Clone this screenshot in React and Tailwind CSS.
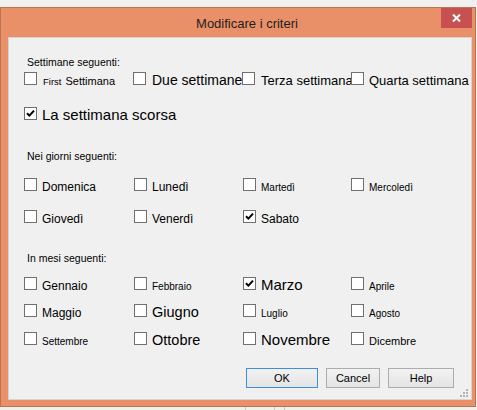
import React from "react";

const font = { fontFamily: '"Liberation Sans", Arial, sans-serif' };

/** Classic Win32 checkbox: 13px, gray edge, white fill */
const Box = ({ checked }) => (
  <span className="relative block w-[13px] h-[13px] shrink-0 border border-[#707070] bg-white">
    {checked && (
      <svg className="absolute left-0 top-0" width="11" height="11" viewBox="0 0 11 11">
        <path d="M2 5.2 L4.4 7.6 L9 2.6" fill="none" stroke="#000" strokeWidth="2" />
      </svg>
    )}
  </span>
);

const Check = ({ label, size, checked, gap = "ml-[5px]" }) => (
  <div className="flex items-baseline">
    <Box checked={checked} />
    <span className={`${gap} ${size} leading-none whitespace-nowrap text-black`}>{label}</span>
  </div>
);

const Label = ({ children }) => (
  <div className="h-[12px] pl-[18px] text-[10.5px] leading-[12px] text-black">{children}</div>
);

const Btn = ({ children, primary, w }) => (
  <button
    className={`${w} h-[20px] text-[11px] leading-none text-black bg-gradient-to-b from-[#f2f2f2] to-[#e4e4e4] border ${
      primary ? "border-[#3c8fe0]" : "border-[#acacac]"
    }`}
  >
    {children}
  </button>
);

const days = [
  [
    { label: "Domenica", size: "text-[12px]" },
    { label: "Lunedì", size: "text-[12px]" },
    { label: "Martedì", size: "text-[10px]" },
    { label: "Mercoledì", size: "text-[10px]" },
  ],
  [
    { label: "Giovedì", size: "text-[12px]" },
    { label: "Venerdì", size: "text-[12px]" },
    { label: "Sabato", size: "text-[12px]", checked: true },
  ],
];

const months = [
  [
    { label: "Gennaio", size: "text-[12px]" },
    { label: "Febbraio", size: "text-[10px]" },
    { label: "Marzo", size: "text-[15px]", checked: true },
    { label: "Aprile", size: "text-[10px]" },
  ],
  [
    { label: "Maggio", size: "text-[12px]" },
    { label: "Giugno", size: "text-[14.5px]" },
    { label: "Luglio", size: "text-[10px]" },
    { label: "Agosto", size: "text-[10px]" },
  ],
  [
    { label: "Settembre", size: "text-[10px]" },
    { label: "Ottobre", size: "text-[14.5px]" },
    { label: "Novembre", size: "text-[15px]" },
    { label: "Dicembre", size: "text-[11px]" },
  ],
];

const Row = ({ items, mt }) => (
  <div className={`grid grid-cols-[110px_109px_108px_1fr] h-[13px] pl-[15px] ${mt}`}>
    {items.map((it) => (
      <Check key={it.label} {...it} />
    ))}
  </div>
);

export default function App() {
  return (
    <div className="w-[477px] h-[410px] bg-[#f0f0f0] overflow-hidden" style={font}>
      {/* dialog frame */}
      <div className="mt-[7px] w-[476px] h-[400px] border border-[#b77552] bg-[#ea9068] pl-[7px] pr-[3px] pb-[6px]">
        <div className="relative h-[29px] flex justify-center pt-[9px] pl-[14px]">
          <span className="text-[13px] leading-none text-[#1e1e1e]">Modificare i criteri</span>
          <div className="absolute top-0 right-0 w-[31px] h-[20px] bg-[#c75050] flex items-center justify-center">
            <svg width="9" height="8" viewBox="0 0 9 8">
              <path d="M1 0.5 L8 7.5 M8 0.5 L1 7.5" stroke="#fff" strokeWidth="2" />
            </svg>
          </div>
        </div>

        {/* client area */}
        <div className="relative w-[464px] h-[363px] bg-[#f0f0f0] border border-[#d4d4d4] pt-[18px]">
          <Label>Settimane seguenti:</Label>
          <div className="grid grid-cols-[109px_109px_109px_1fr] h-[13px] pl-[15px] mt-[4px]">
            <div className="flex items-baseline">
              <Box />
              <span className="ml-[6px] text-[9.5px] leading-none whitespace-nowrap">First</span>
              <span className="ml-[4px] text-[11px] leading-none whitespace-nowrap">Settimana</span>
            </div>
            <Check label="Due settimane" size="text-[14px]" gap="ml-[6px]" />
            <Check label="Terza settimana" size="text-[13px]" gap="ml-[6px]" />
            <Check label="Quarta settimana" size="text-[13px]" />
          </div>
          <div className="h-[13px] pl-[15px] mt-[22px]">
            <Check label="La settimana scorsa" size="text-[15px]" checked />
          </div>

          <div className="mt-[30px]">
            <Label>Nei giorni seguenti:</Label>
          </div>
          <Row items={days[0]} mt="mt-[16px]" />
          <Row items={days[1]} mt="mt-[19px]" />

          <div className="mt-[29px]">
            <Label>In mesi seguenti:</Label>
          </div>
          <Row items={months[0]} mt="mt-[13px]" />
          <Row items={months[1]} mt="mt-[14px]" />
          <Row items={months[2]} mt="mt-[15px]" />

          <div className="flex justify-end gap-[8px] pr-[17px] mt-[23px]">
            <Btn primary w="w-[72px]">OK</Btn>
            <Btn w="w-[54px]">Cancel</Btn>
            <Btn w="w-[66px]">Help</Btn>
          </div>

          {/* size grip */}
          <svg className="absolute right-[3px] bottom-[2px]" width="8" height="8" viewBox="0 0 8 8">
            <g fill="#b4b4b4">
              <rect x="6" y="0" width="2" height="2" />
              <rect x="3" y="3" width="2" height="2" />
              <rect x="6" y="3" width="2" height="2" />
              <rect x="0" y="6" width="2" height="2" />
              <rect x="3" y="6" width="2" height="2" />
              <rect x="6" y="6" width="2" height="2" />
            </g>
          </svg>
        </div>
      </div>

      {/* window behind, peeking out below */}
      <div className="flex h-[3px]">
        <div className="w-[246px] border-r border-[#c8c8c8]" />
        <div className="w-[29px] border-r border-[#c8c8c8]" />
        <div className="w-[10px] border-r border-[#c8c8c8]" />
      </div>
    </div>
  );
}
